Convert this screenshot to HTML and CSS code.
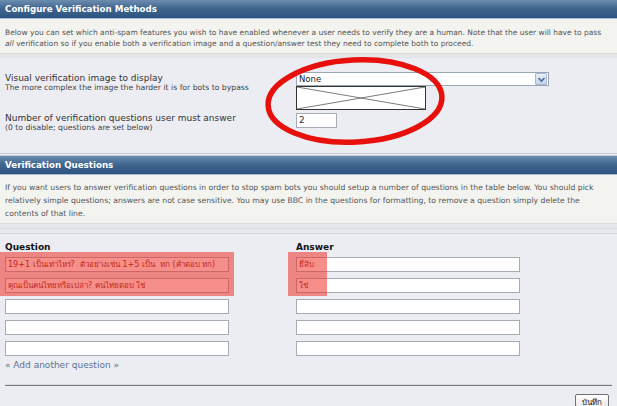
FILE: index.html
```
<!DOCTYPE html>
<html lang="en">
<head>
    <meta charset="UTF-8">
    <title>Anti-spam settings</title>
    <link rel="stylesheet" href="styles.css">
</head>
<body>
    <div class="page">
        <div class="cat-bar"><h3>Configure Verification Methods</h3></div>
        <div class="info-bar">
            Below you can set which anti-spam features you wish to have enabled whenever a user needs to verify they are a human. Note that the user will have to pass <em>all</em> verification so if you enable both a verification image and a question/answer test they need to complete both to proceed.
        </div>
        <div class="window-bg top-form">
            <dl class="settings">
                <dt>
                    Visual verification image to display
                    <span class="small">The more complex the image the harder it is for bots to bypass</span>
                </dt>
                <dd>
                    <div class="select">
                        <span>None</span>
                        <span class="select-arrow">
                            <svg width="9" height="9" viewBox="0 0 9 9"><path d="M1.5 3 L4.5 6 L7.5 3" fill="none" stroke="#4a6a9a" stroke-width="1.6"/></svg>
                        </span>
                    </div>
                    <div class="broken-img">
                        <svg width="130" height="23" viewBox="0 0 130 23" preserveAspectRatio="none"><line x1="0" y1="0" x2="130" y2="23" stroke="#555" stroke-width="0.8"/><line x1="0" y1="23" x2="130" y2="0" stroke="#555" stroke-width="0.8"/></svg>
                    </div>
                </dd>
                <dt>
                    Number of verification questions user must answer
                    <span class="small">(0 to disable; questions are set below)</span>
                </dt>
                <dd>
                    <div class="input short">2</div>
                </dd>
            </dl>
        </div>

        <div class="cat-bar second"><h3>Verification Questions</h3></div>
        <div class="info-bar tall">
            If you want users to answer verification questions in order to stop spam bots you should setup a number of questions in the table below. You should pick relatively simple questions; answers are not case sensitive. You may use BBC in the questions for formatting, to remove a question simply delete the contents of that line.
        </div>
        <div class="stripes"></div>
        <div class="window-bg questions">
            <div class="qa-grid">
                <div class="col-head">Question</div>
                <div class="col-head">Answer</div>
                <div class="input wide">19+1 เป็นเท่าไหร่?&nbsp; ตัวอย่างเช่น 1+5 เป็น&nbsp; หก (คำตอบ หก)</div>
                <div class="input wide">ยี่สิบ</div>
                <div class="input wide">คุณเป็นคนไทยหรือเปล่า? คนไทยตอบ ใช่</div>
                <div class="input wide">ใช่</div>
                <div class="input wide"></div>
                <div class="input wide"></div>
                <div class="input wide"></div>
                <div class="input wide"></div>
                <div class="input wide"></div>
                <div class="input wide"></div>
            </div>
            <a class="add-link" href="#">&laquo; Add another question &raquo;</a>
            <hr class="rule">
            <div class="actions"><button class="btn">บันทึก</button></div>
        </div>

        <!-- annotations drawn over the screenshot -->
        <svg class="ring" width="200" height="100" viewBox="0 0 200 100">
            <ellipse cx="95" cy="46" rx="87" ry="41" fill="none" stroke="#e8100c" stroke-width="5.5" transform="rotate(-3 95 46)"/>
        </svg>
        <span class="mark mark-q"></span>
        <span class="mark mark-a"></span>
    </div>
</body>
</html>
```

FILE: styles.css
```
body {
    margin: 0;
    background-color: #ecedf2;
    font-family: "DejaVu Sans", Verdana, sans-serif;
    color: #333;
}

.page {
    position: relative;
    width: 617px;
    height: 406px;
    overflow: hidden;
    background-color: #ecedf2;
}

.cat-bar {
    height: 18px;
    background: linear-gradient(#6d8db0, #41678f 45%, #2c5380);
    border-bottom: 1px solid #a9bdd3;
    padding-left: 5px;
}

.cat-bar h3 {
    margin: 0;
    color: #fff;
    font-size: 8.7px;
    font-weight: bold;
    line-height: 18px;
}

.cat-bar.second {
    margin-top: 1px;
    border-top: 1px solid #c9ced8;
}

.info-bar {
    background-color: #f3f3ef;
    color: #555;
    font-size: 7.5px;
    line-height: 11px;
    padding: 8px 5px 4px 5px;
    border-bottom: 1px solid #dcdcd6;
}

.info-bar.tall {
    font-size: 7.7px;
    line-height: 13px;
    padding: 6px 5px 3px 5px;
}

.stripes {
    height: 9px;
    background: linear-gradient(#e6e7ea 0, #e6e7ea 4px, #d9dade 4px, #d9dade 5px, #e8e9ee 5px);
    border-bottom: 1px solid #d3d4d9;
}

.window-bg {
    background-color: #ecedf2;
}

.top-form {
    border-top: 4px solid #e4e5e8;
    padding: 14px 5px 21px 5px;
    border-bottom: 1px solid #c9ced8;
}

.settings {
    display: grid;
    grid-template-columns: 291px 1fr;
    row-gap: 2px;
    margin: 0;
}

.settings dt {
    font-size: 9px;
    line-height: 10px;
    color: #333;
    padding-top: 1px;
}

.settings dt .small {
    display: block;
    font-size: 7.7px;
    line-height: 9px;
    color: #444;
}

.settings dd {
    margin: 0;
}

.select {
    display: flex;
    justify-content: space-between;
    align-items: center;
    width: 249px;
    height: 12px;
    border: 1px solid #98a6b8;
    background-color: #fff;
    font-size: 8.5px;
    padding-left: 2px;
    color: #222;
}

.select-arrow {
    display: flex;
    align-items: center;
    justify-content: center;
    width: 10px;
    height: 10px;
    margin-right: 1px;
    background: linear-gradient(#e9eef8, #c5d3ea);
    border: 1px solid #a9b8d2;
    border-radius: 1px;
}

.broken-img {
    width: 128px;
    height: 22px;
    border: 1px solid #333;
    background-color: #fff;
}

.broken-img svg {
    display: block;
    width: 128px;
    height: 22px;
}

.input {
    height: 13px;
    border: 1px solid #a5acb5;
    background-color: #fff;
    font-size: 8px;
    line-height: 13px;
    padding-left: 2px;
    color: #333;
    white-space: nowrap;
    overflow: hidden;
}

.input.short {
    width: 37px;
    margin-top: 1px;
    font-size: 9px;
}

.input.wide {
    width: 220px;
    color: #8a1b14;
}

.questions {
    padding: 8px 5px 0 5px;
}

.qa-grid {
    display: grid;
    grid-template-columns: 291px 1fr;
    row-gap: 6px;
}

.col-head {
    font-size: 9px;
    font-weight: bold;
    color: #111;
    margin-bottom: -1px;
}

.add-link {
    display: block;
    margin-top: 4px;
    font-size: 9px;
    color: #5d7190;
    text-decoration: none;
}

.rule {
    margin: 15px 0 0 0;
    border: 0;
    height: 1px;
    background-color: #7a7b80;
    box-shadow: 0 -1px 0 #dadbe0;
}

.actions {
    display: flex;
    justify-content: flex-end;
    padding: 8px 3px 0 0;
}

.btn {
    font-family: "DejaVu Sans", sans-serif;
    font-size: 8px;
    padding: 1px 6px;
    height: 16px;
    background: linear-gradient(#ffffff, #e4e4e4);
    border: 1px solid #707070;
    border-radius: 2px;
    color: #222;
}

.ring {
    position: absolute;
    left: 260px;
    top: 55px;
}

.mark {
    position: absolute;
    background-color: rgba(238, 50, 40, 0.55);
}

.mark-q {
    left: 0;
    top: 252px;
    width: 234px;
    height: 44px;
}

.mark-a {
    left: 288px;
    top: 252px;
    width: 39px;
    height: 44px;
}
```
